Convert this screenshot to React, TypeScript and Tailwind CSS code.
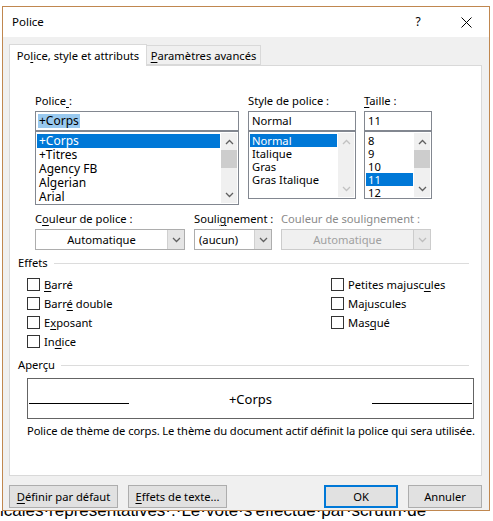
import type { ReactNode } from "react";

function Chevron({ dir, color = "#606060" }: { dir: "up" | "down"; color?: string }) {
  return (
    <svg width="9" height="6" viewBox="0 0 9 6" fill="none">
      <path
        d={dir === "up" ? "M1 5L4.5 1.5L8 5" : "M1 1L4.5 4.5L8 1"}
        stroke={color}
        strokeWidth="1.3"
      />
    </svg>
  );
}

function Scrollbar({ thumb, disabled }: { thumb?: boolean; disabled?: boolean }) {
  const c = disabled ? "#c2c2c2" : "#606060";
  return (
    <div className="w-[16px] h-full bg-[#f0f0f0] flex flex-col">
      <div className="h-[17px] flex items-center justify-center">
        <Chevron dir="up" color={c} />
      </div>
      {thumb ? <div className="h-[18px] bg-[#cdcdcd]" /> : null}
      <div className="flex-1" />
      <div className="h-[17px] flex items-center justify-center">
        <Chevron dir="down" color={c} />
      </div>
    </div>
  );
}

function U({ children }: { children: ReactNode }) {
  return <span className="underline underline-offset-2">{children}</span>;
}

function ListBox({
  items,
  selected,
  height,
  rowH,
  text,
  thumb,
  disabled,
}: {
  items: string[];
  selected: number;
  height: string;
  rowH: string;
  text: string;
  thumb?: boolean;
  disabled?: boolean;
}) {
  return (
    <div className={`flex border border-[#828790] bg-white p-px overflow-hidden ${height}`}>
      <div className={`flex-1 flex flex-col pr-px pt-px ${text}`}>
        {items.map((it, i) => (
          <div
            key={it}
            className={`${rowH} shrink-0 flex items-center pl-[2px] whitespace-nowrap ${
              i === selected ? "bg-[#0078d7] text-white" : ""
            }`}
          >
            {it}
          </div>
        ))}
      </div>
      <Scrollbar thumb={thumb} disabled={disabled} />
    </div>
  );
}

function Select({
  value,
  width,
  center,
  disabled,
}: {
  value: string;
  width: string;
  center?: boolean;
  disabled?: boolean;
}) {
  return (
    <div
      className={`flex h-[21px] border ${width} ${
        disabled ? "border-[#cccccc] bg-[#f0f0f0] text-[#a0a0a0]" : "border-[#adadad] bg-white"
      }`}
    >
      <div className={`flex-1 flex items-center px-[4px] ${center ? "justify-center" : ""}`}>
        {value}
      </div>
      <div
        className={`w-[17px] flex items-center justify-center border-l ${
          disabled ? "border-[#cccccc] bg-[#e8e8e8]" : "border-[#d0d0d0] bg-[#e5e5e5]"
        }`}
      >
        <Chevron dir="down" color={disabled ? "#bdbdbd" : "#606060"} />
      </div>
    </div>
  );
}

function Check({ children }: { children: ReactNode }) {
  return (
    <div className="h-[19px] flex items-center gap-[4px] whitespace-nowrap">
      <div className="w-[13px] h-[13px] border border-[#333333] bg-white" />
      <span>{children}</span>
    </div>
  );
}

function Button({ children, width, primary }: { children: ReactNode; width: string; primary?: boolean }) {
  return (
    <div
      className={`h-[23px] ${width} flex items-center justify-center bg-[#e1e1e1] whitespace-nowrap ${
        primary ? "border-2 border-[#0078d7]" : "border border-[#adadad]"
      }`}
    >
      {children}
    </div>
  );
}

function Group({ title, children }: { title: string; children: ReactNode }) {
  return (
    <div>
      <div className="h-[16px] flex items-center gap-[6px] pr-[6px]">
        <span>{title}</span>
        <div className="flex-1 h-px bg-[#dcdcdc]" />
      </div>
      {children}
    </div>
  );
}

export default function App() {
  return (
    <div className="w-[493px] h-[521px] bg-white overflow-hidden font-['Noto_Sans',sans-serif] text-[11.2px] text-black leading-[14px]">
      <div className="pt-[6px] pl-[2px]">
        <div className="w-[488px] h-[505px] border border-[#c0874f] flex flex-col bg-[#f0f0f0]">
          {/* title bar */}
          <div className="h-[30px] bg-white flex items-center pl-[9px] text-[11.5px]">
            <span className="flex-1">Police</span>
            <span className="w-[12px] text-center mr-[37px] text-[12px]">?</span>
            <svg width="11" height="11" viewBox="0 0 11 11" className="mr-[17px]">
              <path d="M0.5 0.5L10.5 10.5M10.5 0.5L0.5 10.5" stroke="#000" strokeWidth="1" />
            </svg>
          </div>

          <div className="flex-1 pl-[6px] pr-[7px] pt-[7px] flex flex-col">
            {/* tabs */}
            <div className="flex h-[21px] items-end relative z-10 whitespace-nowrap">
              <div className="h-[22px] w-[138px] bg-white border border-b-0 border-[#d9d9d9] flex items-center justify-center -mb-px">
                Po<U>l</U>ice, style et attributs
              </div>
              <div className="h-[20px] w-[114px] border border-l-0 border-[#d9d9d9] flex items-center justify-center bg-[#f0f0f0] pt-px">
                <U>P</U>aramètres avancés
              </div>
            </div>

            {/* panel */}
            <div className="h-[411px] bg-white border border-[#d9d9d9] pl-[8px] pr-[6px]">
              <div className="ml-[17px] mt-[28px] flex">
                <div className="w-[204px]">
                  <div className="h-[17px] whitespace-nowrap">
                    Police<U>&nbsp;</U>:
                  </div>
                  <div className="h-[20px] border border-[#828790] flex items-center pl-[2px] text-[12px]">
                    <span className="bg-[#99c9ef] px-px">+Corps</span>
                  </div>
                  <ListBox
                    items={["+Corps", "+Titres", "Agency FB", "Algerian", "Arial"]}
                    selected={0}
                    height="h-[74px]"
                    rowH="h-[14px]"
                    text="text-[12px] leading-[14px]"
                    thumb
                  />
                </div>
                <div className="w-[108px] ml-[9px]">
                  <div className="h-[17px] whitespace-nowrap">Style de police :</div>
                  <div className="h-[20px] border border-[#828790] flex items-center pl-[3px]">Normal</div>
                  <ListBox
                    items={["Normal", "Italique", "Gras", "Gras Italique"]}
                    selected={0}
                    height="h-[68px]"
                    rowH="h-[13px]"
                    text="text-[11.2px] leading-[13px]"
                    disabled
                  />
                </div>
                <div className="w-[68px] ml-[8px]">
                  <div className="h-[17px] whitespace-nowrap">
                    <U>T</U>aille :
                  </div>
                  <div className="h-[20px] border border-[#828790] flex items-center pl-[3px]">11</div>
                  <ListBox
                    items={["8", "9", "10", "11", "12"]}
                    selected={3}
                    height="h-[68px]"
                    rowH="h-[13px]"
                    text="text-[11.2px] leading-[13px]"
                    thumb
                  />
                </div>
              </div>

              <div className="ml-[17px] mt-[7px] flex whitespace-nowrap">
                <div className="w-[150px]">
                  <div className="h-[17px]">
                    C<U>o</U>uleur de police :
                  </div>
                  <Select value="Automatique" width="w-[150px]" center />
                </div>
                <div className="w-[78px] ml-[9px]">
                  <div className="h-[17px]">
                    Souli<U>g</U>nement :
                  </div>
                  <Select value="(aucun)" width="w-[78px]" />
                </div>
                <div className="w-[150px] ml-[9px]">
                  <div className="h-[17px] text-[#8a8a8a]">Couleur de soulignement :</div>
                  <Select value="Automatique" width="w-[150px]" center disabled />
                </div>
              </div>

              <div className="mt-[5px]">
                <Group title="Effets">
                  <div className="ml-[9px] mt-[4px] flex">
                    <div className="w-[304px]">
                      <Check>
                        <U>B</U>arré
                      </Check>
                      <Check>
                        Barr<U>é</U> double
                      </Check>
                      <Check>
                        E<U>x</U>posant
                      </Check>
                      <Check>
                        In<U>d</U>ice
                      </Check>
                    </div>
                    <div>
                      <Check>
                        Petites majusc<U>u</U>les
                      </Check>
                      <Check>
                        Ma<U>j</U>uscules
                      </Check>
                      <Check>
                        Mas<U>q</U>ué
                      </Check>
                    </div>
                  </div>
                </Group>
              </div>

              <div className="mt-[6px]">
                <Group title="Aperçu">
                  <div className="ml-[9px] mt-[5px] w-[447px] h-[41px] border border-[#646464] flex items-center px-px">
                    <div className="w-[100px] h-px bg-black mt-[9px]" />
                    <div className="flex-1 text-center text-[13px]">+Corps</div>
                    <div className="w-[100px] h-px bg-black mt-[9px]" />
                  </div>
                  <div className="ml-[9px] mt-[5px] whitespace-nowrap tracking-[-0.1px]">
                    Police de thème de corps. Le thème du document actif définit la police qui sera utilisée.
                  </div>
                </Group>
              </div>
            </div>

            {/* buttons */}
            <div className="mt-[9px] flex">
              <Button width="w-[109px]">
                <U>D</U>éfinir par défaut
              </Button>
              <Button width="w-[99px] ml-[10px]">
                <U>E</U>ffets de texte...
              </Button>
              <div className="flex-1" />
              <Button width="w-[74px]" primary>
                OK
              </Button>
              <Button width="w-[74px] ml-[10px]">Annuler</Button>
            </div>
          </div>
        </div>
        <div className="h-[10px] overflow-hidden -ml-[2px]">
          <div className="-mt-[10px] text-[17px] leading-[20px] whitespace-nowrap font-['Liberation_Sans',sans-serif]">
            icales·représentatives·:·Le·vote·s'effectue·par·scrutin·de
          </div>
        </div>
      </div>
    </div>
  );
}
